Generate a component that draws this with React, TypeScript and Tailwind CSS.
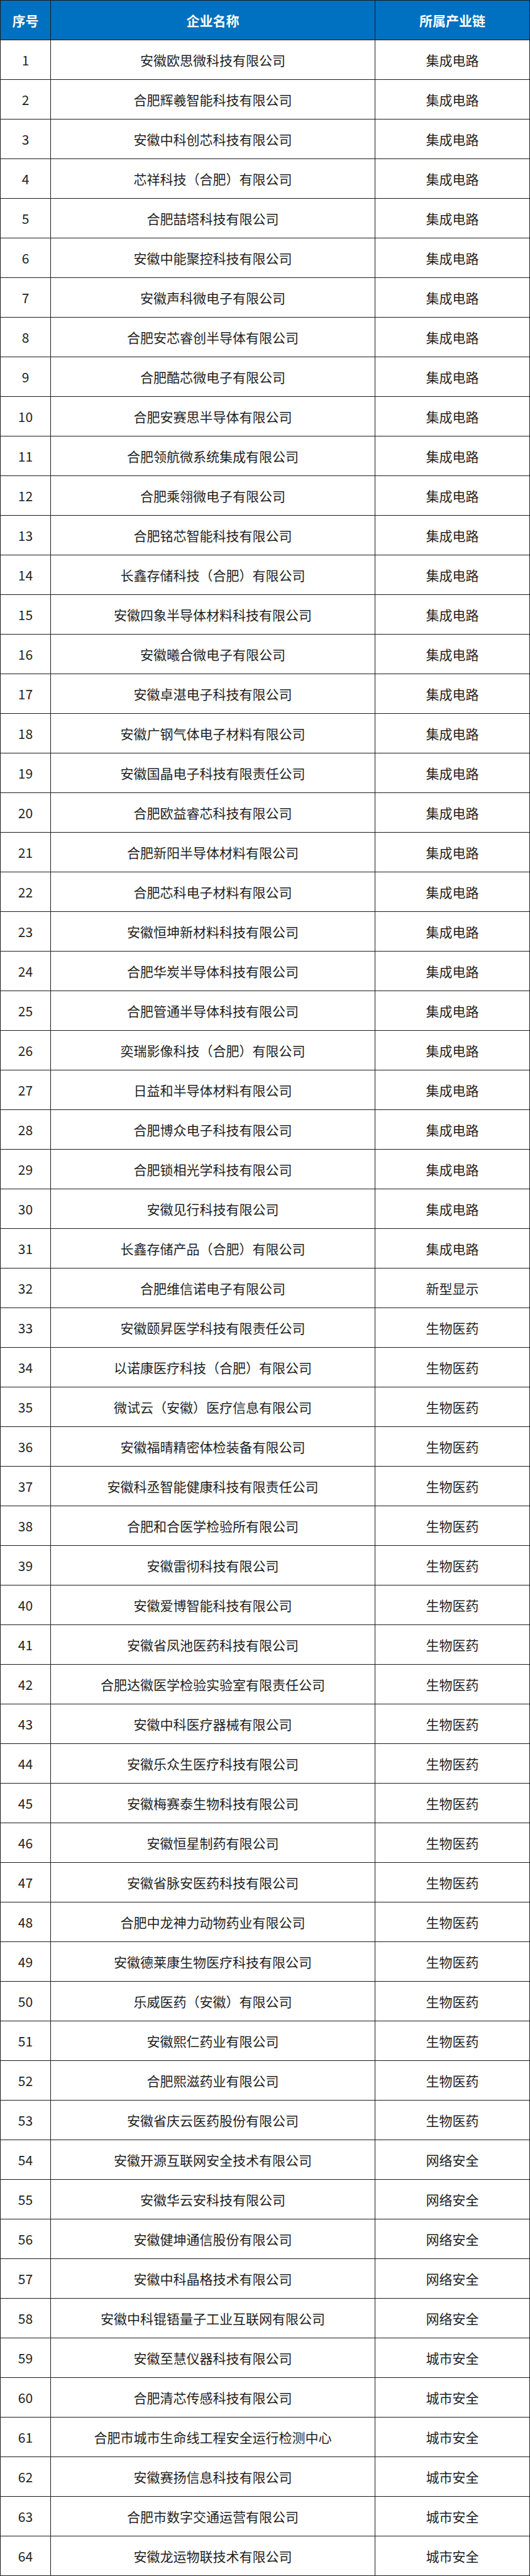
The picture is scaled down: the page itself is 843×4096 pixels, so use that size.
const COMPANIES: [string, string][] = [
  ["安徽欧思微科技有限公司", "集成电路"],
  ["合肥辉羲智能科技有限公司", "集成电路"],
  ["安徽中科创芯科技有限公司", "集成电路"],
  ["芯祥科技（合肥）有限公司", "集成电路"],
  ["合肥喆塔科技有限公司", "集成电路"],
  ["安徽中能聚控科技有限公司", "集成电路"],
  ["安徽声科微电子有限公司", "集成电路"],
  ["合肥安芯睿创半导体有限公司", "集成电路"],
  ["合肥酷芯微电子有限公司", "集成电路"],
  ["合肥安赛思半导体有限公司", "集成电路"],
  ["合肥领航微系统集成有限公司", "集成电路"],
  ["合肥乘翎微电子有限公司", "集成电路"],
  ["合肥铭芯智能科技有限公司", "集成电路"],
  ["长鑫存储科技（合肥）有限公司", "集成电路"],
  ["安徽四象半导体材料科技有限公司", "集成电路"],
  ["安徽曦合微电子有限公司", "集成电路"],
  ["安徽卓湛电子科技有限公司", "集成电路"],
  ["安徽广钢气体电子材料有限公司", "集成电路"],
  ["安徽国晶电子科技有限责任公司", "集成电路"],
  ["合肥欧益睿芯科技有限公司", "集成电路"],
  ["合肥新阳半导体材料有限公司", "集成电路"],
  ["合肥芯科电子材料有限公司", "集成电路"],
  ["安徽恒坤新材料科技有限公司", "集成电路"],
  ["合肥华炭半导体科技有限公司", "集成电路"],
  ["合肥管通半导体科技有限公司", "集成电路"],
  ["奕瑞影像科技（合肥）有限公司", "集成电路"],
  ["日益和半导体材料有限公司", "集成电路"],
  ["合肥博众电子科技有限公司", "集成电路"],
  ["合肥锁相光学科技有限公司", "集成电路"],
  ["安徽见行科技有限公司", "集成电路"],
  ["长鑫存储产品（合肥）有限公司", "集成电路"],
  ["合肥维信诺电子有限公司", "新型显示"],
  ["安徽颐昇医学科技有限责任公司", "生物医药"],
  ["以诺康医疗科技（合肥）有限公司", "生物医药"],
  ["微试云（安徽）医疗信息有限公司", "生物医药"],
  ["安徽福晴精密体检装备有限公司", "生物医药"],
  ["安徽科丞智能健康科技有限责任公司", "生物医药"],
  ["合肥和合医学检验所有限公司", "生物医药"],
  ["安徽雷彻科技有限公司", "生物医药"],
  ["安徽爱博智能科技有限公司", "生物医药"],
  ["安徽省凤池医药科技有限公司", "生物医药"],
  ["合肥达徽医学检验实验室有限责任公司", "生物医药"],
  ["安徽中科医疗器械有限公司", "生物医药"],
  ["安徽乐众生医疗科技有限公司", "生物医药"],
  ["安徽梅赛泰生物科技有限公司", "生物医药"],
  ["安徽恒星制药有限公司", "生物医药"],
  ["安徽省脉安医药科技有限公司", "生物医药"],
  ["合肥中龙神力动物药业有限公司", "生物医药"],
  ["安徽德莱康生物医疗科技有限公司", "生物医药"],
  ["乐威医药（安徽）有限公司", "生物医药"],
  ["安徽熙仁药业有限公司", "生物医药"],
  ["合肥熙滋药业有限公司", "生物医药"],
  ["安徽省庆云医药股份有限公司", "生物医药"],
  ["安徽开源互联网安全技术有限公司", "网络安全"],
  ["安徽华云安科技有限公司", "网络安全"],
  ["安徽健坤通信股份有限公司", "网络安全"],
  ["安徽中科晶格技术有限公司", "网络安全"],
  ["安徽中科锟铻量子工业互联网有限公司", "网络安全"],
  ["安徽至慧仪器科技有限公司", "城市安全"],
  ["合肥清芯传感科技有限公司", "城市安全"],
  ["合肥市城市生命线工程安全运行检测中心", "城市安全"],
  ["安徽赛扬信息科技有限公司", "城市安全"],
  ["合肥市数字交通运营有限公司", "城市安全"],
  ["安徽龙运物联技术有限公司", "城市安全"],
];

const font = "font-['Noto_Sans_CJK_SC','Noto_Sans',sans-serif]";

export default function App() {
  return (
    <div className={`w-[843px] bg-white ${font} text-[21px] leading-none`}>
      <div className="border-x border-t border-[#1c1c1c]">
        <div className="grid h-[63px] grid-cols-[80px_516px_1fr] border-b border-[#1c1c1c] bg-[#0070c0] font-bold text-white">
          <div className="flex items-center justify-center border-r border-[#1c1c1c]">序号</div>
          <div className="flex items-center justify-center border-r border-[#1c1c1c]">企业名称</div>
          <div className="flex items-center justify-center">所属产业链</div>
        </div>

        {COMPANIES.map(([name, chain], i) => (
          <div
            key={name}
            className="grid h-[63px] grid-cols-[80px_516px_1fr] border-b border-[#1c1c1c] text-[#1f1f1f]"
          >
            <div className="flex items-center justify-center border-r border-[#1c1c1c]">{i + 1}</div>
            <div className="flex items-center justify-center border-r border-[#1c1c1c]">{name}</div>
            <div className="flex items-center justify-center">{chain}</div>
          </div>
        ))}
      </div>
    </div>
  );
}
